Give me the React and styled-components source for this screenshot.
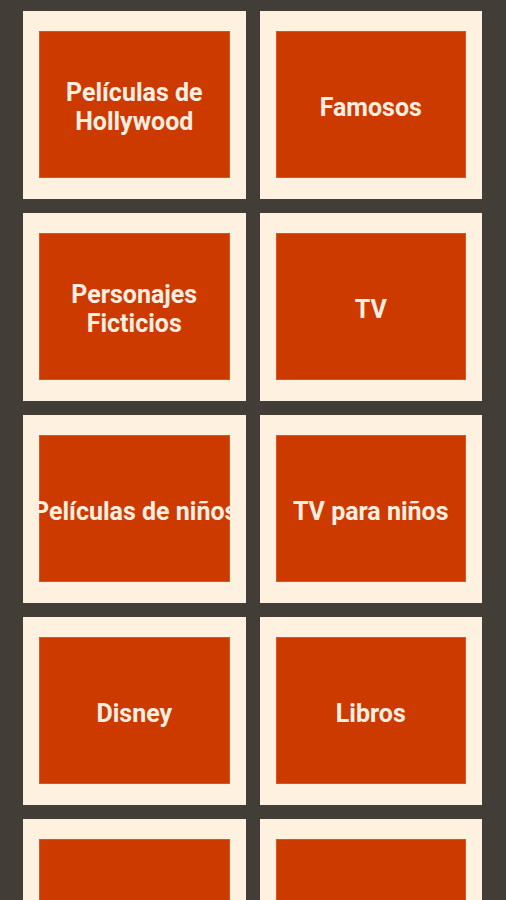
import React from "react";
import styled, { createGlobalStyle } from "styled-components";

const Global = createGlobalStyle`
  html, body {
    margin: 0;
    padding: 0;
    background: #433d38;
  }
  body {
    font-family: Roboto, "Liberation Sans", sans-serif;
  }
`;

const Grid = styled.div`
  display: grid;
  grid-template-columns: repeat(2, minmax(0, 1fr));
  column-gap: 14px;
  row-gap: 14px;
  padding: 11px 24px 0 23px;
  background: #433d38;
`;

const Card = styled.div`
  min-width: 0;
  background: #fef1df;
  padding: 20px 16px 21px 16px;
`;

const Tile = styled.div`
  min-width: 0;
  height: 147px;
  background: #cd3a00;
  box-shadow: inset 0 0 0 1px #dc5420;
  display: flex;
  align-items: center;
  justify-content: center;
`;

const Label = styled.div`
  flex: 0 0 calc(100% + 12px);
  margin: 0 -6px;
  min-width: 0;
  overflow: hidden;
  text-align: center;
  color: #fdeee2;
  font-family: Roboto, "Liberation Sans", sans-serif;
  font-weight: 700;
  font-size: 25px;
  line-height: 29px;
  white-space: ${(p) => (p.$single ? "nowrap" : "normal")};
  padding: 5px 0 0;
  box-sizing: border-box;
`;

const items = [
  { label: "Películas de Hollywood" },
  { label: "Famosos" },
  { label: "Personajes Ficticios" },
  { label: "TV" },
  { label: "Películas de niños", single: true },
  { label: "TV para niños" },
  { label: "Disney" },
  { label: "Libros" },
  { label: "" },
  { label: "" },
];

export default function App() {
  return (
    <>
      <Global />
      <Grid>
        {items.map((it, i) => (
          <Card key={i}>
            <Tile>
              <Label $single={it.single}>{it.label}</Label>
            </Tile>
          </Card>
        ))}
      </Grid>
    </>
  );
}
